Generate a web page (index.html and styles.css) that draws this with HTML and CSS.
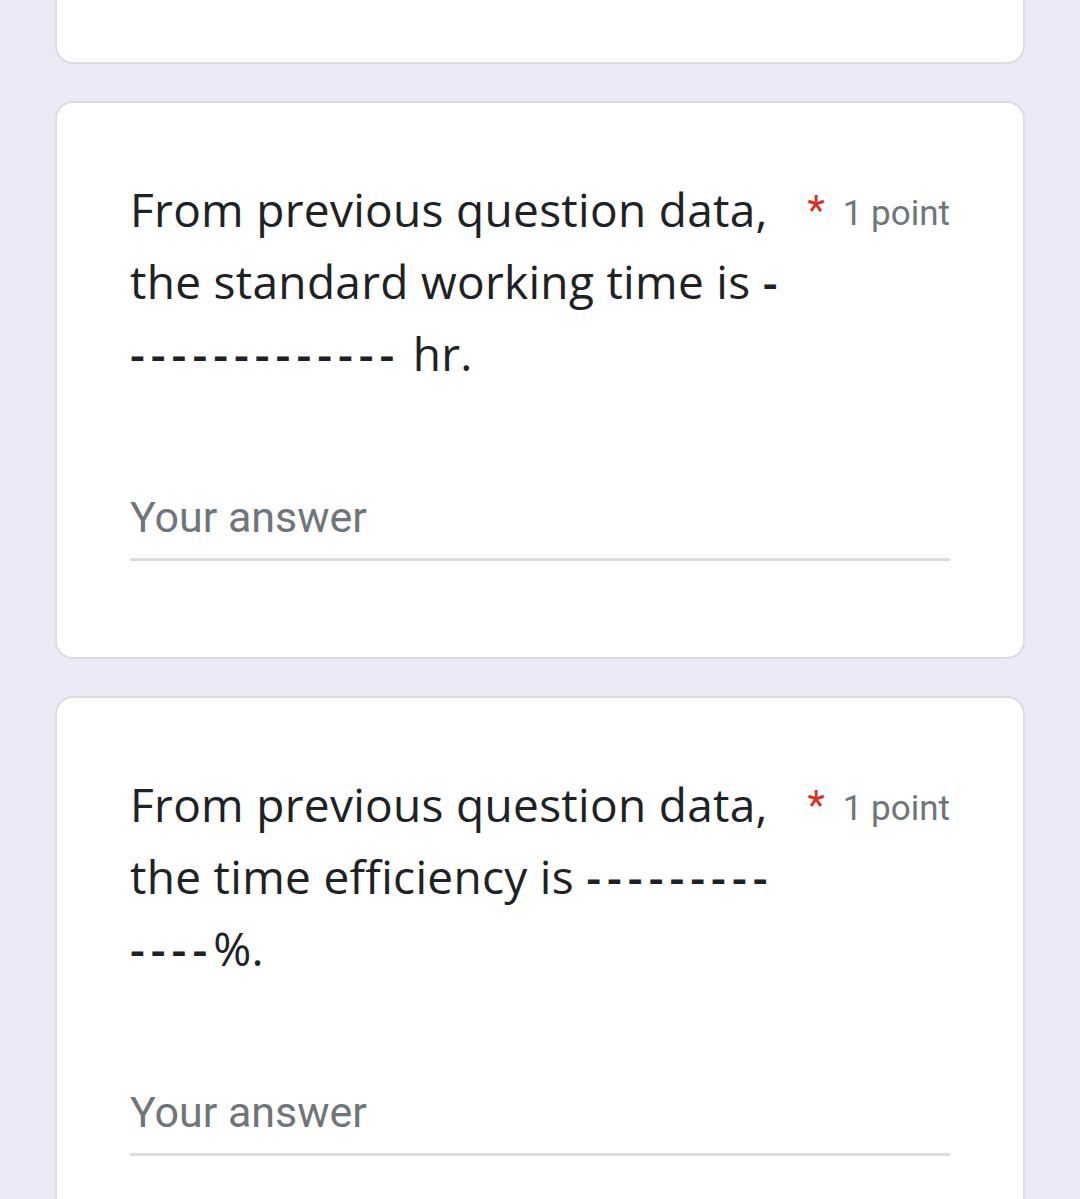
FILE: index.html
```html
<!DOCTYPE html>
<html>
<head>
<meta charset="utf-8">
<link rel="stylesheet" href="styles.css">
</head>
<body>
<div class="page">
  <div class="card card-top"></div>
  <div class="card">
    <div class="q-head">
      <div class="q-title">From previous question data, the standard working time is <span class="blank">-</span><br><span class="blank">-------------</span> hr.</div>
      <div class="q-meta"><span class="req">*</span><span class="pts">1 point</span></div>
    </div>
    <div class="answer"><span class="placeholder">Your answer</span></div>
  </div>
  <div class="card">
    <div class="q-head">
      <div class="q-title">From previous question data, the time efficiency is <span class="blank">---------</span><br><span class="blank">----</span>%.</div>
      <div class="q-meta"><span class="req">*</span><span class="pts">1 point</span></div>
    </div>
    <div class="answer"><span class="placeholder">Your answer</span></div>
  </div>
</div>
</body>
</html>
```
FILE: styles.css
```css
html, body {
  margin: 0;
  padding: 0;
  background: #ede9f7;
}
.page {
  padding: 0 55px;
  display: flex;
  flex-direction: column;
  gap: 37px;
  margin-top: -40px;
}
.card {
  background: #fff;
  border: 2px solid #dcdbe2;
  border-radius: 18px;
  padding: 70px 73px 96px;
}
.card-top {
  height: 104px;
  padding: 0;
  box-sizing: border-box;
}
.q-head {
  display: flex;
  justify-content: space-between;
  align-items: flex-start;
}
.q-title {
  width: 670px;
  font-family: "Open Sans", sans-serif;
  font-size: 46px;
  letter-spacing: 0.3px;
  line-height: 72px;
  color: #202124;
}
.blank {
  letter-spacing: 6px;
  font-weight: 600;
}
.q-meta {
  display: flex;
  align-items: flex-start;
  padding-top: 18px;
  font-family: Roboto, sans-serif;
}
.req {
  color: #d93025;
  font-size: 40px;
  line-height: 40px;
  margin-right: 18px;
}
.pts {
  color: #70757a;
  font-size: 35px;
  line-height: 46px;
}
.answer {
  margin-top: 103px;
  border-bottom: 3px solid #dadce0;
  padding-bottom: 16px;
}
.placeholder {
  font-family: Roboto, sans-serif;
  font-size: 43px;
  line-height: 50px;
  color: #70757a;
}
```
